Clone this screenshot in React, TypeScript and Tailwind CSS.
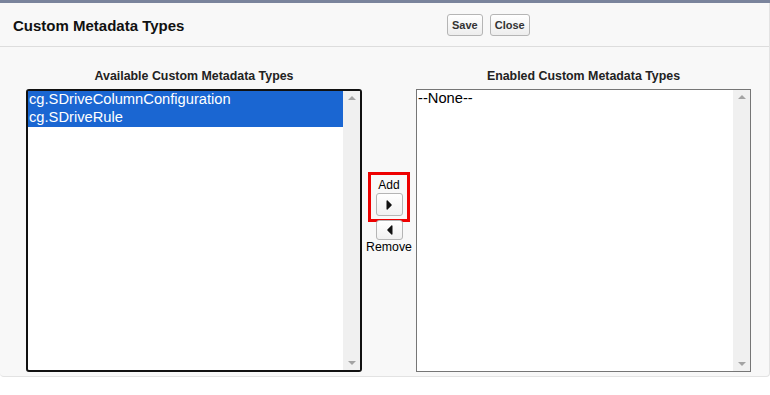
import { FaCaretLeft, FaCaretRight } from "react-icons/fa";

const available = ["cg.SDriveColumnConfiguration", "cg.SDriveRule"];

function Scrollbar() {
  return (
    <div className="flex w-[17px] shrink-0 flex-col justify-between bg-[#f0f0f0] py-[5px]">
      <div className="mx-auto h-0 w-0 border-x-[4px] border-b-[4px] border-x-transparent border-b-[#a3a3a3]" />
      <div className="mx-auto h-0 w-0 border-x-[4px] border-t-[4px] border-x-transparent border-t-[#a3a3a3]" />
    </div>
  );
}

function ArrowButton({ dir }: { dir: "left" | "right" }) {
  return (
    <button
      type="button"
      className={
        dir === "right"
          ? "flex h-[23px] w-[27px] items-center justify-center rounded-[3px] border border-[#b5b5b5] bg-gradient-to-b from-white to-[#f1f1f1] text-[#111]"
          : "flex h-[20px] w-[27px] items-center justify-center rounded-[3px] border border-[#b5b5b5] bg-gradient-to-b from-white to-[#f1f1f1] text-[#111]"
      }
    >
      {dir === "right" ? <FaCaretRight className="h-[16px] w-[11px]" /> : <FaCaretLeft className="h-[16px] w-[11px]" />}
    </button>
  );
}

export default function App() {
  return (
    <div className="h-[395px] w-[770px] bg-white font-['Liberation_Sans',Arial,sans-serif] text-[#000]">
      <div className="h-[3px] bg-[#7a849c]" />
      <div className="rounded-b-[4px] border-b border-r border-[#e3e3e3] bg-[#f8f8f8]">
        <div className="relative flex h-[44px] items-center border-b border-[#dddddd] px-[13px] pt-[3px]">
          <h1 className="text-[15px] font-bold text-[#111]">Custom Metadata Types</h1>
          <div className="absolute left-[447px] top-[11px] flex gap-[7px]">
            <button
              type="button"
              className="h-[22px] rounded-[3px] border border-[#b5b5b5] bg-gradient-to-b from-white to-[#ededed] px-[4px] text-[11px] font-bold text-[#333]"
            >
              Save
            </button>
            <button
              type="button"
              className="h-[22px] rounded-[3px] border border-[#b5b5b5] bg-gradient-to-b from-white to-[#ededed] px-[4px] text-[11px] font-bold text-[#333]"
            >
              Close
            </button>
          </div>
        </div>

        <div className="flex pb-[4px] pl-[26px] pt-[22px]">
          <div className="flex w-[336px] flex-col">
            <div className="mb-[6px] text-center text-[12.4px] font-bold leading-[14px] text-[#222]">
              Available Custom Metadata Types
            </div>
            <div className="flex h-[283px] rounded-[3px] border-2 border-[#111] bg-white">
              <div className="flex-1">
                {available.map((item) => (
                  <div key={item} className="bg-[#1a66d2] pb-[2px] pl-[1px] text-[14.7px] leading-[16px] text-white">
                    {item}
                  </div>
                ))}
              </div>
              <Scrollbar />
            </div>
          </div>

          <div className="flex w-[54px] flex-col items-center pt-[103px]">
            <div className="flex w-[42px] flex-col items-center border-[3px] border-[#ee0000] pb-[3px] pt-[2px]">
              <span className="text-[12px] leading-[16px]">Add</span>
              <ArrowButton dir="right" />
            </div>
            <div className="mt-[-2px]">
              <ArrowButton dir="left" />
            </div>
            <span className="text-[12.3px] leading-[15px]">Remove</span>
          </div>

          <div className="flex w-[335px] flex-col">
            <div className="mb-[6px] text-center text-[12.4px] font-bold leading-[14px] text-[#222]">
              Enabled Custom Metadata Types
            </div>
            <div className="flex h-[283px] border border-[#767676] bg-white">
              <div className="flex-1 pl-[1px] text-[14.7px] leading-[16px]">--None--</div>
              <Scrollbar />
            </div>
          </div>
        </div>
      </div>
    </div>
  );
}
